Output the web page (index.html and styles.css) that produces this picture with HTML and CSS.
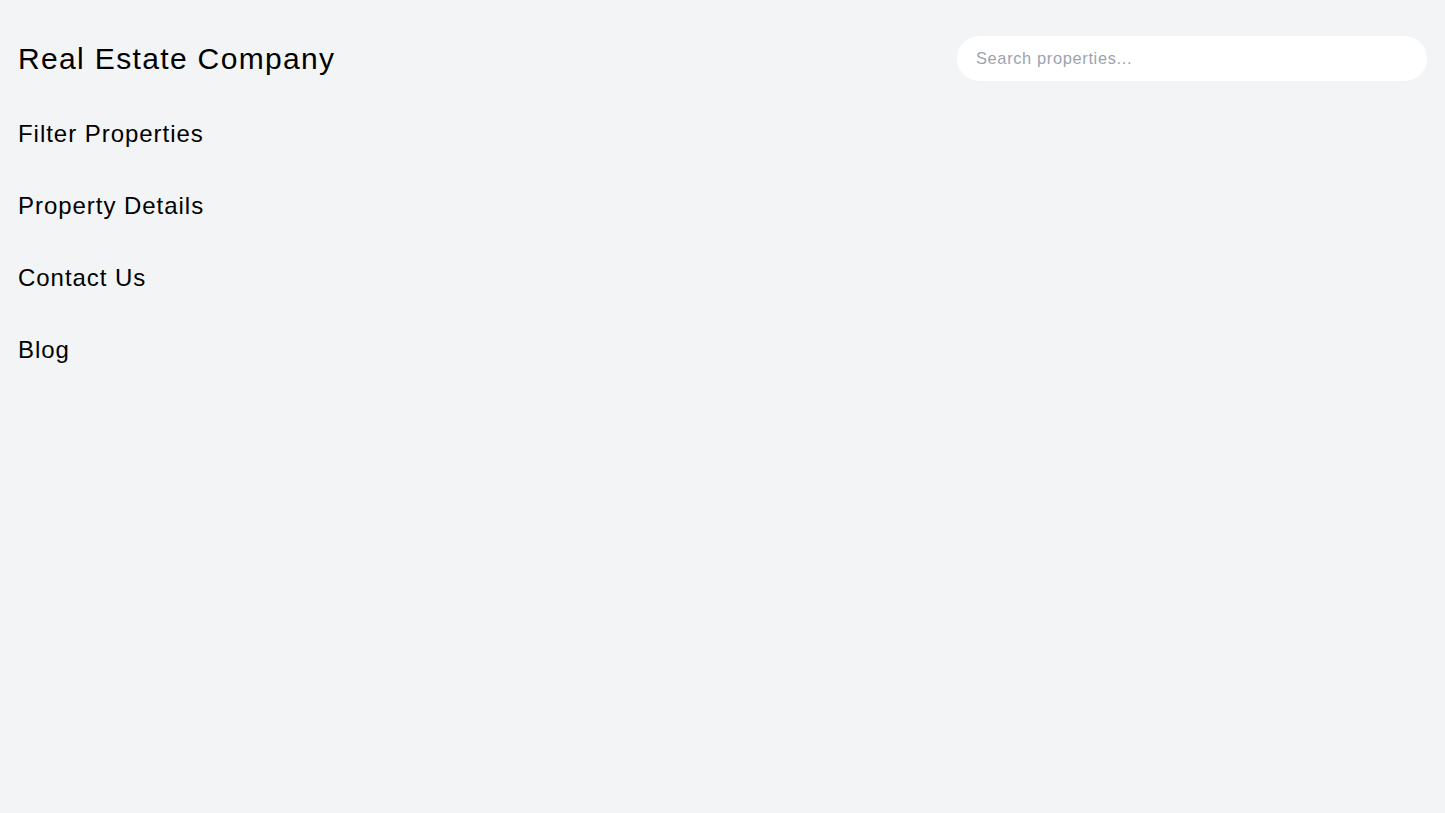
FILE: index.html
```html
<!DOCTYPE html>
<html lang="en">
<head>
    <meta charset="UTF-8">
    <meta name="viewport" content="width=device-width, initial-scale=1.0">
    <title>Real Estate Company</title>
    <link rel="stylesheet" href="styles.css">
</head>
<body>
    <div class="page">
        <header class="site-header">
            <h1>Real Estate Company</h1>
            <input type="text" class="search" placeholder="Search properties...">
        </header>
        <section class="section">
            <h2>Filter Properties</h2>
        </section>
        <section class="section">
            <h2>Property Details</h2>
        </section>
        <section class="section">
            <h2>Contact Us</h2>
        </section>
        <section class="section">
            <h2>Blog</h2>
        </section>
    </div>
</body>
</html>
```

FILE: styles.css
```css
* {
    margin: 0;
    padding: 0;
    box-sizing: border-box;
    font-family: 'Liberation Sans', Arial, sans-serif;
    letter-spacing: 0.04em;
}
body {
    background: #f3f4f6;
    color: #000000;
    min-height: 100vh;
}
.page {
    padding: 36px 18px 16px 18px;
}
.site-header {
    display: flex;
    justify-content: space-between;
    align-items: center;
    height: 45px;
    margin-bottom: 37px;
}
h1 {
    font-size: 30px;
    line-height: 36px;
    font-weight: 400;
    letter-spacing: 0.045em;
}
.search {
    width: 470px;
    height: 45px;
    padding: 0 19px;
    border: none;
    border-radius: 9999px;
    background: #ffffff;
    font-size: 16.4px;
    color: #111827;
    outline: none;
}
.search::placeholder {
    color: #9ca3af;
}
.section {
    margin-bottom: 40px;
}
h2 {
    font-size: 24px;
    line-height: 32px;
    font-weight: 400;
}
```
